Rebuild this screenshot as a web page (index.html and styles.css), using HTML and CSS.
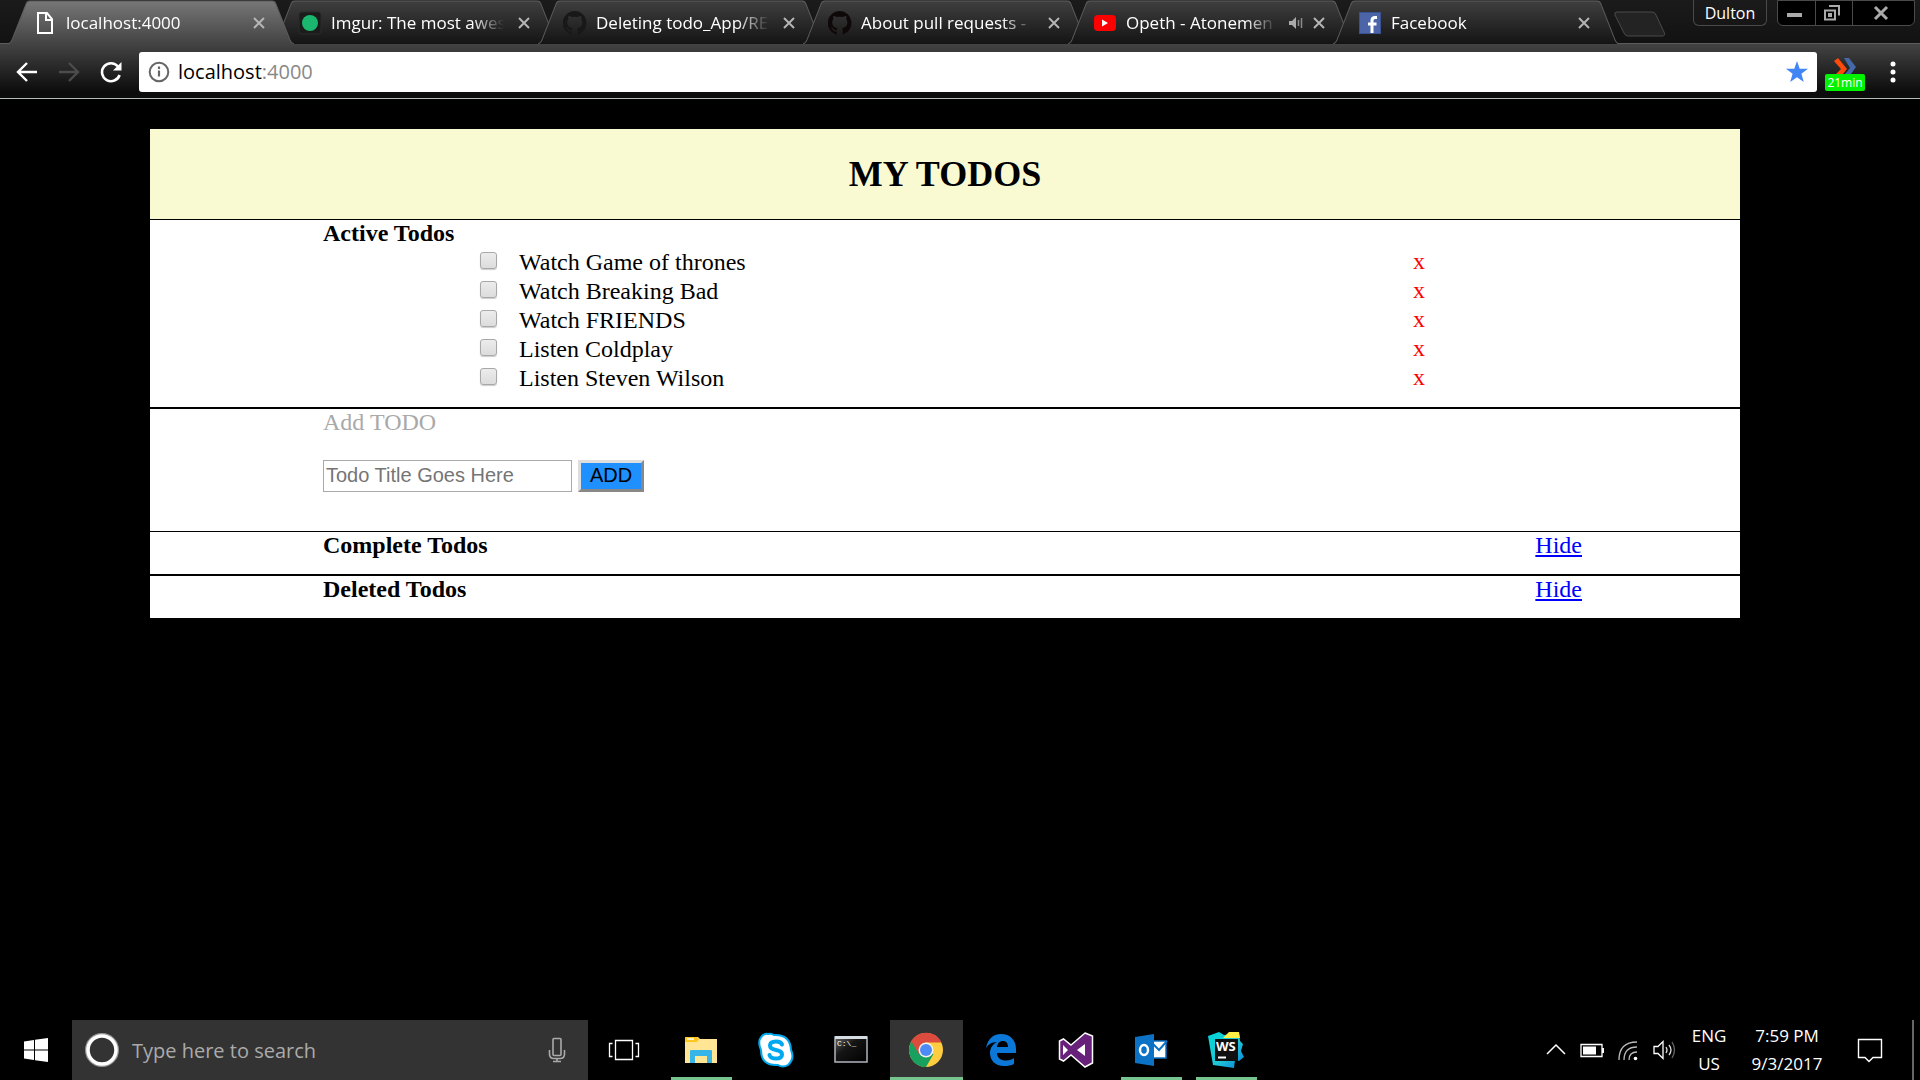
FILE: index.html
```html
<!DOCTYPE html>
<html lang="en">
<head>
<meta charset="utf-8">
<title>localhost:4000</title>
<link rel="stylesheet" href="styles.css">
</head>
<body>
<svg class="defs" aria-hidden="true">
  <defs>
    <linearGradient id="tab-on" x1="0" y1="0" x2="0" y2="1"><stop offset="0" stop-color="#777"/><stop offset="1" stop-color="#434343"/></linearGradient>
    <linearGradient id="tab-off" x1="0" y1="0" x2="0" y2="1"><stop offset="0" stop-color="#3f3f3f"/><stop offset="1" stop-color="#141414"/></linearGradient>
    <linearGradient id="ws-fill" x1="0" y1="0" x2="1" y2="1"><stop offset="0" stop-color="#00d8d8"/><stop offset=".55" stop-color="#20c8d8"/><stop offset="1" stop-color="#087cd8"/></linearGradient>
    <linearGradient id="cmd-fill" x1="0" y1="0" x2="1" y2="1"><stop offset="0" stop-color="#666"/><stop offset=".4" stop-color="#151515"/><stop offset="1" stop-color="#000"/></linearGradient>
    <symbol id="shape" viewBox="0 0 286 43" preserveAspectRatio="none"><path d="M0 43 Q3 42 4 39 L18 4 Q19 1 22 1 H264 Q267 1 268 4 L282 39 Q283 42 286 43" stroke="#5c5c5c"/></symbol>
    <symbol id="close" viewBox="0 0 16 16"><path d="M3 3 13 13M13 3 3 13" fill="none" stroke="#b5b5b5" stroke-width="2"/></symbol>
    <symbol id="github" viewBox="0 0 24 24"><path d="M12 0a12 12 0 0 0-4 23.400c.6.1.8-.3.8-.6v-2.300c-3.300.7-4-1.400-4-1.400-.6-1.400-1.400-1.800-1.400-1.800-1-.7.1-.7.1-.7 1.200.1 1.900 1.200 1.900 1.200 1 1.900 2.800 1.300 3.500 1 .1-.8.4-1.300.8-1.600-2.700-.3-5.500-1.300-5.500-5.900 0-1.300.5-2.400 1.200-3.200-.1-.3-.5-1.500.1-3.200 0 0 1-.3 3.300 1.200a11.500 11.500 0 0 1 6 0c2.300-1.500 3.300-1.200 3.300-1.200.7 1.700.2 2.900.1 3.200.8.800 1.200 1.900 1.200 3.200 0 4.600-2.800 5.600-5.500 5.900.4.4.8 1.100.8 2.200v3.300c0 .3.2.7.8.6A12 12 0 0 0 12 0z"/></symbol>
  </defs>
</svg>

<header class="browser">
  <div class="strip">
    <nav class="tabs" aria-label="Tabs">
      <div class="tab tab-active">
        <svg class="tab-shape"><use href="#shape" fill="url(#tab-on)"/></svg>
        <svg class="favicon" viewBox="0 0 24 24"><path d="M5 2h9l5 6v14H5zM13 2v7h6" fill="none" stroke="#fff" stroke-width="2"/></svg>
        <span class="tab-title">localhost:4000</span>
        <button class="tab-close" aria-label="Close tab"><svg><use href="#close"/></svg></button>
      </div>
      <div class="tab">
        <svg class="tab-shape"><use href="#shape" fill="url(#tab-off)"/></svg>
        <svg class="favicon" viewBox="0 0 24 24"><rect x="1" y="1" width="22" height="22" rx="3" fill="#1c1c1c" stroke="#2a2a2a"/><circle cx="12" cy="12" r="8" fill="#1bb76e"/></svg>
        <span class="tab-title">Imgur: The most awes</span>
        <button class="tab-close" aria-label="Close tab"><svg><use href="#close"/></svg></button>
      </div>
      <div class="tab">
        <svg class="tab-shape"><use href="#shape" fill="url(#tab-off)"/></svg>
        <svg class="favicon"><use href="#github" fill="#181818"/></svg>
        <span class="tab-title">Deleting todo_App/RE</span>
        <button class="tab-close" aria-label="Close tab"><svg><use href="#close"/></svg></button>
      </div>
      <div class="tab">
        <svg class="tab-shape"><use href="#shape" fill="url(#tab-off)"/></svg>
        <svg class="favicon"><use href="#github" fill="#0e0808"/></svg>
        <span class="tab-title">About pull requests -</span>
        <button class="tab-close" aria-label="Close tab"><svg><use href="#close"/></svg></button>
      </div>
      <div class="tab">
        <svg class="tab-shape"><use href="#shape" fill="url(#tab-off)"/></svg>
        <svg class="favicon" viewBox="0 0 24 24"><rect x="1" y="4" width="22" height="16" rx="4" fill="#f00"/><path d="M9 8.500v7l6-3.500z" fill="#fff"/></svg>
        <span class="tab-title">Opeth - Atonemen</span>
        <svg class="audio" viewBox="0 0 14 14"><path d="M0 5h3l4-4v12L3 9H0z" fill="#aaa"/><path d="M9.500 4v6M12.500 2v10" stroke="#8a8a8a" stroke-width="1.500"/></svg>
        <button class="tab-close" aria-label="Close tab"><svg><use href="#close"/></svg></button>
      </div>
      <div class="tab">
        <svg class="tab-shape"><use href="#shape" fill="url(#tab-off)"/></svg>
        <svg class="favicon" viewBox="0 0 24 24"><rect x="1.500" y="1.500" width="21" height="21" fill="#4b65a8" stroke="#3a5292"/><path d="M19 6.500h-2q-3 0-3 3V22M10 13h8.500" fill="none" stroke="#fff" stroke-width="3"/></svg>
        <span class="tab-title">Facebook</span>
        <button class="tab-close" aria-label="Close tab"><svg><use href="#close"/></svg></button>
      </div>
      <button class="new-tab" aria-label="New tab"><svg viewBox="0 0 52 26"><path d="M3 1H38Q41 1 42 4L50 21Q52 25 48 25H14Q11 25 10 22L1 4Q0 1 3 1z" fill="#232323" stroke="#4a4a4a"/></svg></button>
    </nav>
    <div class="window-controls">
      <button class="profile">Dulton</button>
      <div class="window-buttons">
        <button aria-label="Minimize"><svg viewBox="0 0 18 18"><path d="M2 11h15" stroke="#aaa" stroke-width="4"/></svg></button>
        <button aria-label="Restore"><svg viewBox="0 0 18 18"><path d="M2 6.500h10v9H2z M6 2h10v9.500" fill="none" stroke="#aaa" stroke-width="2"/><path d="M5 9h4v4H5z" fill="#aaa"/></svg></button>
        <button aria-label="Close window"><svg viewBox="0 0 18 18"><path d="M3 3 15 15M15 3 3 15" stroke="#aaa" stroke-width="3"/></svg></button>
      </div>
    </div>
  </div>
  <div class="toolbar">
    <button class="nav-button" aria-label="Back"><svg viewBox="0 0 22 22"><path d="M21 11H3M11 2 2 11l9 9" fill="none" stroke="#fff" stroke-width="2.400"/></svg></button>
    <button class="nav-button" aria-label="Forward"><svg viewBox="0 0 22 22"><path d="M1 11h18M11 2l9 9-9 9" fill="none" stroke="#4c4c4c" stroke-width="2.400"/></svg></button>
    <button class="nav-button" aria-label="Reload"><svg viewBox="0 0 22 22"><path d="M18 5.500A9 9 0 1 0 19.600 14" fill="none" stroke="#fff" stroke-width="2.600"/><path d="M21.500 1v8.500H13z" fill="#fff"/></svg></button>
    <div class="omnibox">
      <svg class="info" viewBox="0 0 22 22"><circle cx="11" cy="11" r="9.300" fill="none" stroke="#666" stroke-width="2"/><path d="M11 9.500v6M11 5.500v2.400" stroke="#666" stroke-width="2.200"/></svg>
      <a class="address" href="#">localhost<span class="port">:4000</span></a>
      <svg class="star" viewBox="0 0 22 22"><path d="M11 0l2.700 7.700H22l-6.600 5 2.400 8.300L11 16.200 4.200 21l2.400-8.300L0 7.700h8.300z" fill="#4285f4"/></svg>
    </div>
    <div class="extension">
      <svg viewBox="0 0 24 16"><path d="M11 0h5l7 9-5 7h-6l5-6z" fill="#4468a8"/><path d="M1 3 5 0l9 11-4 5H3l5-5z" fill="#ff4a0c"/></svg>
      <span class="badge">21min</span>
    </div>
    <button class="menu-button" aria-label="Menu"><svg viewBox="0 0 6 22"><circle cx="3" cy="3" r="2.500" fill="#fff"/><circle cx="3" cy="11" r="2.500" fill="#fff"/><circle cx="3" cy="19" r="2.500" fill="#fff"/></svg></button>
  </div>
  <div class="browser-edge"></div>
</header>

<main class="page">
  <div class="todos">
    <h1 class="title">MY TODOS</h1>
    <section class="section">
      <h2 class="heading">Active Todos</h2>
      <ul class="list">
        <li class="item"><input class="check" type="checkbox" id="t1"><label class="name" for="t1">Watch Game of thrones</label><button class="delete">x</button></li>
        <li class="item"><input class="check" type="checkbox" id="t2"><label class="name" for="t2">Watch Breaking Bad</label><button class="delete">x</button></li>
        <li class="item"><input class="check" type="checkbox" id="t3"><label class="name" for="t3">Watch FRIENDS</label><button class="delete">x</button></li>
        <li class="item"><input class="check" type="checkbox" id="t4"><label class="name" for="t4">Listen Coldplay</label><button class="delete">x</button></li>
        <li class="item"><input class="check" type="checkbox" id="t5"><label class="name" for="t5">Listen Steven Wilson</label><button class="delete">x</button></li>
      </ul>
    </section>
    <section class="section section-add">
      <label class="add-label" for="new-todo">Add TODO</label>
      <div class="add-form">
        <input class="add-input" id="new-todo" type="text" placeholder="Todo Title Goes Here">
        <button class="add-button">ADD</button>
      </div>
    </section>
    <section class="section section-row section-thin">
      <h2 class="heading">Complete Todos</h2>
      <a class="hide" href="#">Hide</a>
    </section>
    <section class="section section-row">
      <h2 class="heading">Deleted Todos</h2>
      <a class="hide" href="#">Hide</a>
    </section>
  </div>
</main>

<footer class="taskbar">
  <button class="start" aria-label="Start"><svg viewBox="0 0 24 24"><path d="M0 3.500 10 2v9.500H0zM11 1.800 24 0v11.500H11zM0 12.500h10V22L0 20.500zM11 12.500h13V24l-13-1.800z" fill="#fff"/></svg></button>
  <div class="search">
    <svg class="cortana" viewBox="0 0 34 34"><circle cx="17" cy="17" r="15" fill="none" stroke="#999" stroke-width="4"/><circle cx="17" cy="17" r="14" fill="none" stroke="#fff" stroke-width="3.500"/></svg>
    <input class="search-input" type="text" aria-label="Search" placeholder="Type here to search">
    <svg class="mic" viewBox="0 0 18 26"><rect x="5" y="1.500" width="8" height="17" rx="1" fill="none" stroke="#aaa" stroke-width="1.600"/><path d="M1.500 13v4q0 4.500 4.500 4.500h6q4.500 0 4.500-4.500v-4M9 21.500V24M5 24.500h8" fill="none" stroke="#aaa" stroke-width="1.600"/></svg>
  </div>
  <div class="apps">
    <button class="app app-task-view" aria-label="Task view"><svg viewBox="0 0 36 36"><path d="M9.500 8.500h17v19h-17zM6.500 11.500h-3v13h3M29.500 11.500h3v13h-3" fill="none" stroke="#fff" stroke-width="1.300"/></svg></button>
    <button class="app app-open" aria-label="File Explorer"><svg viewBox="0 0 36 36"><path d="M2 5h13l2 2h17v24H2z" fill="#ffe594"/><path d="M2 5h12l2 2-2 3H2z" fill="#ffc61e"/><path d="M4 7h7" stroke="#fff" stroke-width="1.500"/><path d="M7 31V19q0-1 1-1h20q1 0 1 1v12h-5v-7H12v7z" fill="#37b5e8"/></svg></button>
    <button class="app" aria-label="Skype"><svg viewBox="0 0 36 36"><path d="M10 2Q13 1 16 3Q32 2 33 18Q37 27 30 33Q25 36 20 33Q3 34 3 18Q-1 9 4 4Q7 1 10 2z" fill="#fff" stroke="#00a9ef" stroke-width="2"/><path d="M24 12.500Q23 9.500 18 9.500Q12 9.500 12 13.500Q12 17 18 18Q24 19 24 22.500Q24 26.500 18 26.500Q12.500 26.500 11.500 23" fill="none" stroke="#00a9ef" stroke-width="4" stroke-linecap="round"/></svg></button>
    <button class="app" aria-label="Command Prompt"><svg viewBox="0 0 36 36"><rect x="2" y="5" width="32" height="25" fill="url(#cmd-fill)" stroke="#aeb6bd" stroke-width="1.500"/><path d="M2 5.500h32" stroke="#d5dde3" stroke-width="3"/><text class="prompt" x="4" y="14">C:\_</text></svg></button>
    <button class="app app-current" aria-label="Chrome"><svg viewBox="0 0 36 36"><circle cx="18" cy="18" r="17" fill="#ffcd40"/><path d="M18 18 3.300 9.500A17 17 0 0 0 18 35l7.400-12.700z" fill="#17a05e"/><path d="M3.300 9.500A17 17 0 0 1 33.500 10.500H18L11 22z" fill="#db4b3e"/><circle cx="18" cy="18" r="7.500" fill="#f1f1f1"/><circle cx="18" cy="18" r="6" fill="#4c8bf5"/></svg></button>
    <button class="app" aria-label="Edge"><svg viewBox="0 0 36 36"><path d="M3 16C5 6 11 2 18 2c9 0 15 6 15 15v4H14c0 5 4 7.500 9 7.500 4 0 6-1 8-2.500v6c-3 1.500-6 2-10 2C12 34 7 28 7 21c0-5 3-9 7-11-6 0-9 3-11 6zm11-1h11c0-4-2-6-5-6s-5.500 2-6 6z" fill="#0b78d7"/></svg></button>
    <button class="app" aria-label="Visual Studio"><svg viewBox="0 0 36 36"><path d="M27 1 34.500 4V31L27 35 13 23 5.500 29 1.500 27V9L5.500 7 13 13z" fill="#68217a" stroke="#fff" stroke-width="1.500"/><path d="M5 13v10l5-5zM27 12v12l-8-6z" fill="#fff"/></svg></button>
    <button class="app app-open" aria-label="Outlook"><svg viewBox="0 0 36 36"><path d="M18 9h15v17H18z" fill="#fff" stroke="#0b72c6" stroke-width="1.500"/><path d="M19 11l7 7 8-9" fill="none" stroke="#0b72c6" stroke-width="2"/><path d="M2 5 21 2v32L2 31z" fill="#0b72c6"/><ellipse cx="11" cy="18" rx="4" ry="5" fill="none" stroke="#fff" stroke-width="2.500"/></svg></button>
    <button class="app app-open" aria-label="WebStorm"><svg viewBox="0 0 36 36"><path d="M0 4 11 0l5 3 15-2 1 8 3 3-2 7 3 6-5 4-4-1-1 8-21-3z" fill="url(#ws-fill)"/><path d="M15 6 21 0h10l1 6z" fill="#ffee45"/><path d="M7 7h23v22H7z" fill="#101010"/><path d="M10 25.500h8" stroke="#fff" stroke-width="2"/><text class="ws" x="8" y="19">WS</text></svg></button>
  </div>
  <div class="tray">
    <button class="tray-icon" aria-label="Show hidden icons"><svg viewBox="0 0 24 24"><path d="M3 16 12 7l9 9" fill="none" stroke="#fff" stroke-width="1.500"/></svg></button>
    <button class="tray-icon" aria-label="Battery"><svg viewBox="0 0 24 24"><path d="M1 6.500h21v12H1z" fill="none" stroke="#fff" stroke-width="1.300"/><path d="M3 8.500h13v8H3zM22 10h2v5h-2z" fill="#fff"/></svg></button>
    <button class="tray-icon" aria-label="Network"><svg viewBox="0 0 24 24"><path d="M3 22Q3 4 21 4M8 22Q8 9 21 9M13 22Q13 14 21 14" fill="none" stroke="#bbb" stroke-width="1.300"/><circle cx="19.500" cy="20.500" r="1.800" fill="#fff"/></svg></button>
    <button class="tray-icon" aria-label="Volume"><svg viewBox="0 0 24 24"><path d="M2 8.500h4l5-5v17l-5-5H2z" fill="none" stroke="#fff" stroke-width="1.300"/><path d="M14 9q2 3 0 6M17 7q4 5 0 10" fill="none" stroke="#ddd" stroke-width="1.300"/><path d="M20 4q5 8 0 16" fill="none" stroke="#666" stroke-width="1.300"/></svg></button>
    <button class="language">ENG<br>US</button>
    <button class="clock">7:59 PM<br>9/3/2017</button>
    <button class="notifications" aria-label="Notifications"><svg viewBox="0 0 26 26"><path d="M1.500 2.500h23v18H16l-4 4-4-4H1.500z" fill="none" stroke="#fff" stroke-width="1.400"/></svg></button>
    <span class="show-desktop"></span>
  </div>
</footer>
</body>
</html>
```
FILE: styles.css
```css
* {
  box-sizing: border-box;
}

body {
  margin: 0;
  min-height: 100vh;
  display: flex;
  flex-direction: column;
  background: #000;
  font-family: "Open Sans", "Noto Sans", sans-serif;
}

button {
  margin: 0;
  padding: 0;
  border: 0;
  background: none;
  color: inherit;
  font: inherit;
}

svg {
  display: block;
}

.defs {
  position: absolute;
  width: 0;
  height: 0;
}

/* Browser frame */

.strip {
  display: flex;
  justify-content: space-between;
  height: 43px;
  background: linear-gradient(#1b1b1b, #121212);
}

.tabs {
  display: flex;
  flex: 0 1 1672px;
  min-width: 0;
  padding-left: 8px;
}

.tab {
  position: relative;
  display: flex;
  align-items: center;
  flex: 0 1 286px;
  min-width: 0;
  height: 44px;
  padding: 2px 27px 0 25px;
  color: #fff;
  font-size: 17px;
}

.tab + .tab {
  margin-left: -21px;
}

.tab-active {
  z-index: 1;
}

.tab-shape {
  position: absolute;
  inset: 0;
  width: 100%;
  height: 100%;
}

.favicon {
  position: relative;
  flex: none;
  width: 24px;
  height: 24px;
}

.tab-title {
  position: relative;
  flex: 1;
  min-width: 0;
  margin: 0 8px 0 9px;
  overflow: hidden;
  white-space: nowrap;
  line-height: 24px;
  mask-image: linear-gradient(to left, transparent 4px, #000 36px);
}

.audio {
  position: relative;
  flex: none;
  width: 14px;
  height: 14px;
  margin-right: 8px;
}

.tab-close {
  position: relative;
  flex: none;
}

.tab-close svg {
  width: 16px;
  height: 16px;
}

.new-tab {
  flex: none;
  align-self: flex-start;
  margin: 11px 0 0 -5px;
}

.new-tab svg {
  width: 52px;
  height: 26px;
}

.window-controls {
  display: flex;
  align-items: flex-start;
  gap: 10px;
  padding-right: 5px;
}

.profile {
  width: 74px;
  height: 26px;
  border: 1px solid #4a4a4a;
  border-top: 0;
  border-radius: 0 0 6px 6px;
  color: #fff;
  font-size: 16px;
  line-height: 24px;
}

.window-buttons {
  display: flex;
  height: 26px;
  border: 1px solid #4a4a4a;
  border-radius: 0 0 6px 6px;
  background: #000;
}

.window-buttons button {
  display: grid;
  place-items: center;
  width: 37px;
  padding-right: 5px;
}

.window-buttons button + button {
  border-left: 1px solid #4a4a4a;
}

.window-buttons button:last-child {
  width: 62px;
}

.window-buttons svg {
  width: 18px;
  height: 18px;
}

.toolbar {
  display: flex;
  align-items: center;
  height: 49px;
  padding: 8px 24px 1px 16px;
  border-top: 1px solid #5c5c5c;
  background: linear-gradient(#434343, #0c0c0c);
}

.nav-button {
  margin-right: 20px;
}

.nav-button svg {
  width: 22px;
  height: 22px;
}

.omnibox {
  display: flex;
  align-items: center;
  flex: 1;
  height: 40px;
  margin-left: -3px;
  padding: 0 9px;
  border-radius: 3px;
  background: #fff;
}

.info,
.star {
  flex: none;
  width: 22px;
  height: 22px;
}

.address {
  flex: 1;
  margin-left: 8px;
  color: #000;
  font-size: 20px;
  line-height: 28px;
  text-decoration: none;
}

.port {
  color: #888;
}

.extension {
  display: flex;
  flex-direction: column;
  align-items: center;
  align-self: flex-end;
  width: 40px;
  margin: 0 25px 0 8px;
}

.extension svg {
  width: 24px;
  height: 16px;
}

.badge {
  width: 40px;
  border-radius: 2px;
  background: #00f400;
  color: #fff;
  font-size: 12px;
  line-height: 17px;
  text-align: center;
}

.menu-button svg {
  width: 6px;
  height: 22px;
}

.browser-edge {
  height: 7px;
  border-bottom: 1px solid #b4bab4;
  background: #0c0c0c;
}

/* Todo page */

.page {
  flex: 1;
  padding: 30px 180px 30px 150px;
  font-family: "Liberation Serif", "Times New Roman", serif;
  font-size: 24px;
}

.todos {
  background: #fff;
}

.title {
  margin: 0;
  background: #fafad2;
  font-size: 36px;
  line-height: 90px;
  text-align: center;
}

.section {
  padding: 0 158px 14px 173px;
  border-top: 2px solid #000;
}

.title + .section,
.section-thin {
  border-top-width: 1px;
}

.section-row {
  display: flex;
  justify-content: space-between;
}

.section-add {
  padding-bottom: 39px;
}

.heading {
  margin: 0 0 2px;
  font-size: 24px;
  line-height: 26px;
}

.list {
  margin: 0 157px;
  padding: 0;
  list-style: none;
}

.item {
  display: flex;
  align-items: flex-start;
  line-height: 29px;
}

.check {
  appearance: none;
  width: 17px;
  height: 17px;
  margin: 4px 22px 0 0;
  border: 1px solid #a8a8a8;
  border-radius: 3px;
  background: linear-gradient(#ececec, #dcdcdc);
  box-shadow: 0 1px 1px #ccc;
}

.name {
  flex: 1;
}

.delete {
  color: #f00;
  line-height: 27px;
}

.add-label {
  display: block;
  color: #a9a9a9;
  line-height: 26px;
}

.add-form {
  display: flex;
  gap: 6px;
  margin-top: 25px;
}

.add-input,
.add-button {
  height: 32px;
  font-family: "Liberation Sans", Arial, sans-serif;
  font-size: 20px;
}

.add-input {
  width: 249px;
  padding: 0 2px 2px;
  border: 1px solid #a9a9a9;
}

.add-input::placeholder {
  color: #757575;
}

.add-button {
  width: 66px;
  padding-bottom: 2px;
  border: 3px solid;
  border-color: #ddd #888 #888 #ddd;
  background: #1e90ff;
  line-height: 24px;
}

.hide {
  color: #00f;
  line-height: 26px;
}

/* Taskbar */

.taskbar {
  display: flex;
  height: 60px;
  background: #000;
  color: #fff;
}

.start {
  width: 72px;
}

.start svg {
  width: 24px;
  height: 24px;
  margin: 0 auto;
}

.search {
  display: flex;
  align-items: center;
  flex: 0 1 516px;
  padding: 0 22px 0 13px;
  background: #333;
}

.cortana {
  flex: none;
  width: 34px;
  height: 34px;
}

.search-input {
  flex: 1;
  min-width: 0;
  margin-left: 11px;
  border: 0;
  background: none;
  font-family: inherit;
  font-size: 20px;
}

.search-input::placeholder {
  color: #aaa;
}

.mic {
  flex: none;
  width: 18px;
  height: 26px;
}

.apps {
  display: flex;
  gap: 2px;
  margin-left: 2px;
}

.app {
  display: flex;
  justify-content: center;
  align-items: center;
  width: 73px;
  padding-right: 2px;
}

.app-task-view {
  padding-right: 5px;
}

.app svg {
  width: 36px;
  height: 36px;
}

.app-open {
  background: linear-gradient(#76c58f, #76c58f) bottom / 61px 3px no-repeat;
}

.app-current {
  background: linear-gradient(#76c58f, #76c58f) bottom / 100% 3px no-repeat #333;
}

.prompt {
  fill: #fff;
  font: 8px "Liberation Mono", monospace;
}

.ws {
  fill: #fff;
  font: bold 13px "Open Sans", sans-serif;
}

.tray {
  display: flex;
  margin-left: auto;
  padding-right: 6px;
  font-size: 17px;
  line-height: 28px;
}

.tray-icon {
  width: 36px;
}

.tray-icon svg {
  width: 24px;
  height: 24px;
  margin: 0 auto;
}

.language {
  width: 54px;
}

.clock {
  width: 102px;
}

.notifications {
  width: 64px;
}

.notifications svg {
  width: 26px;
  height: 26px;
  margin: 0 auto;
}

.show-desktop {
  width: 2px;
  margin-left: 10px;
  background: #666;
}
```
